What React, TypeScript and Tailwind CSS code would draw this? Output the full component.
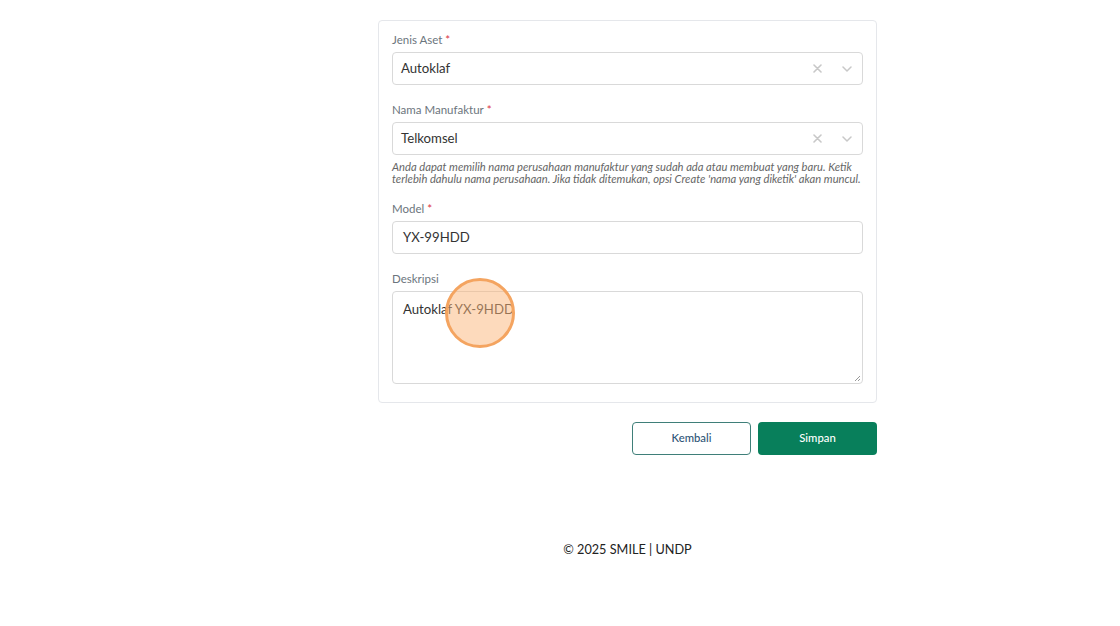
const font = { fontFamily: 'Lato, "Noto Sans", sans-serif' }

function Label({ text, required }: { text: string; required?: boolean }) {
    return (
        <label className="mb-[4px] block text-[11.5px] leading-[16px] text-[#6c757d]">
            {text}
            {required && <span className="ml-[3px] text-[#dc3545]">*</span>}
        </label>
    )
}

function SelectBox({ value }: { value: string }) {
    return (
        <div className="flex h-[33px] items-center rounded-[4px] border border-[#d9d9d9] bg-white pl-[8px] pr-[10px]">
            <span className="flex-1 text-[13.2px] text-[#333]">{value}</span>
            {/* clear */}
            <svg className="mr-[20px]" width="9" height="9" viewBox="0 0 9 9">
                <path d="M1 1 L8 8 M8 1 L1 8" stroke="#c8c8c8" strokeWidth="1.6" strokeLinecap="round" />
            </svg>
            {/* dropdown */}
            <svg width="10" height="6" viewBox="0 0 10 6">
                <path d="M1 1 L5 5 L9 1" fill="none" stroke="#c8c8c8" strokeWidth="1.5" strokeLinecap="round" strokeLinejoin="round" />
            </svg>
        </div>
    )
}

export default function App() {
    return (
        <div className="relative min-h-[626px] bg-white pl-[135px]" style={font}>
            <div className="mx-auto w-[499px] pt-[20px]">
                {/* Form card */}
                <div className="rounded-[4px] border border-[#e5e7eb] bg-white px-[13px] pb-[18px] pt-[11px]">
                    <Label text="Jenis Aset" required />
                    <SelectBox value="Autoklaf" />

                    <div className="mt-[17px]">
                        <Label text="Nama Manufaktur" required />
                        <SelectBox value="Telkomsel" />
                        <p className="mt-[6px] whitespace-nowrap text-[11.2px] italic leading-[12px] text-[#666]">
                            Anda dapat memilih nama perusahaan manufaktur yang sudah ada atau membuat yang baru. Ketik
                            <br />
                            terlebih dahulu nama perusahaan. Jika tidak ditemukan, opsi Create 'nama yang diketik' akan muncul.
                        </p>
                    </div>

                    <div className="mt-[16px]">
                        <Label text="Model" required />
                        <div className="flex h-[33px] items-center rounded-[4px] border border-[#d9d9d9] px-[10px] text-[13.2px] text-[#333]">
                            YX-99HDD
                        </div>
                    </div>

                    <div className="mt-[17px]">
                        <Label text="Deskripsi" />
                        <div className="relative h-[93px] rounded-[4px] border border-[#d9d9d9] px-[10px] pt-[7px] text-[13.2px] leading-[20px] text-[#333]">
                            Autoklaf YX-9HDD
                            <svg className="absolute bottom-[1px] right-[1px]" width="7" height="7" viewBox="0 0 7 7">
                                <path d="M6 1 L1 6 M6 4 L4 6" stroke="#999" strokeWidth="1" />
                            </svg>
                        </div>
                    </div>
                </div>

                {/* Actions */}
                <div className="mt-[19px] flex justify-end gap-[7px]">
                    <button className="h-[33px] w-[119px] rounded-[4px] border border-[#3f7f79] bg-white text-[11.3px] font-medium text-[#2f5677]">
                        Kembali
                    </button>
                    <button className="h-[33px] w-[119px] rounded-[4px] bg-[#087f5b] text-[11.3px] font-medium text-white">
                        Simpan
                    </button>
                </div>

                {/* Footer */}
                <p className="mt-[85px] text-center text-[12.7px] leading-[18px] text-[#222]">© 2025 SMILE | UNDP</p>
            </div>

            {/* Click indicator */}
            <div className="absolute left-[445px] top-[278px] h-[70px] w-[70px] rounded-full border-[3px] border-[#f4a460] bg-[#fbb57a]/50" />
        </div>
    )
}
